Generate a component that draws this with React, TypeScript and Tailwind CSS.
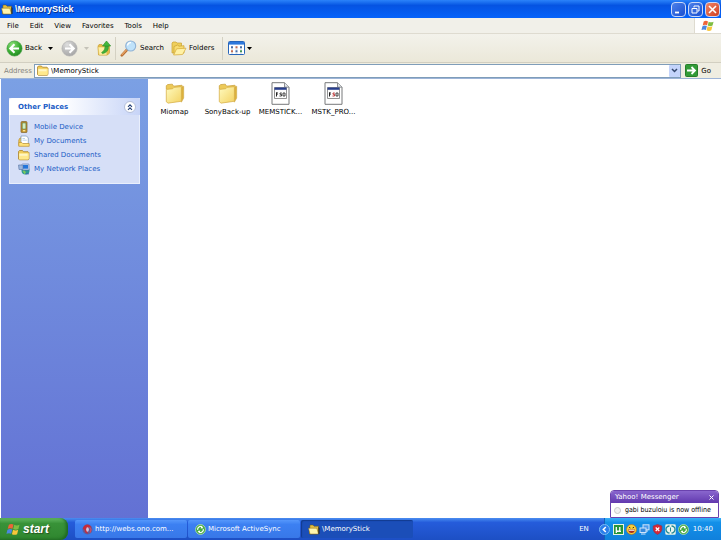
import React from "react";

const TEXT = "font-['DejaVu_Sans',Verdana,sans-serif] text-[7px] leading-[10px]";

function Folder({ className }: { className: string }) {
  return (
    <svg viewBox="0 0 24 24" className={className} aria-hidden="true">
      <defs>
        <linearGradient id="folderFront" x1="0" y1="0" x2="1" y2="1">
          <stop offset="0" stopColor="#fffbc0" />
          <stop offset="1" stopColor="#f3d262" />
        </linearGradient>
      </defs>
      <path d="M2.500 7V3.500L4 2.300 9 1.800 10.500 4 19.500 3 20.500 4.500V8L8 10Z" fill="#edca58" stroke="#c9a03a" strokeWidth=".8" />
      <path d="M18.500 6.500 21.500 4V17L19 21.500Z" fill="#dcb13c" stroke="#c9a03a" strokeWidth=".5" />
      <path d="M2.500 7.500 9.500 6.800 11 5.300 19 4.500V20.500L4.500 22.500 2.500 21Z" fill="url(#folderFront)" stroke="#d6ad43" strokeWidth=".8" />
    </svg>
  );
}

function SmallFolder({ className }: { className: string }) {
  return (
    <svg viewBox="0 0 12 11" className={className} aria-hidden="true">
      <path d="M.5 9.500V2L1.500 1H4.500L5.500 2.200H10L11 3.200V9.500L10.200 10.300H1.300Z" fill="#f0cb58" stroke="#a37a1b" strokeWidth=".7" />
      <path d="M1 3.800H10.800V9.200L10 10H1.500L1 9.500Z" fill="#ffe98c" />
      <path d="M1.500 4.300H9.500V6.300H1.500Z" fill="#fff6c4" />
    </svg>
  );
}

function OpenFolder({ className }: { className: string }) {
  return (
    <svg viewBox="0 0 12 11" className={className} aria-hidden="true">
      <path d="M2 1H5L6 2.200H10.500V9L9 10H1.500Z" fill="#e3bf44" stroke="#6b5410" strokeWidth=".5" />
      <path d="M.5 4.200H8.800L10.500 10H2Z" fill="#fff6ae" stroke="#8c6c12" strokeWidth=".5" />
      <path d="M10.500 3 11.500 4V9.800L10.500 10.300Z" fill="#2b2512" />
    </svg>
  );
}

function WinFlag({ className }: { className: string }) {
  return (
    <svg viewBox="0 0 16 14" className={className} aria-hidden="true">
      <path d="M3 1.800Q5.500.2 8 1.700L6.900 6.200Q4.500 4.900 1.800 6.300Z" fill="#ee6438" />
      <path d="M8.800 2Q11.500 3.500 14.500 1.900L13.300 6.500Q10.500 8 7.700 6.500Z" fill="#7fbd42" />
      <path d="M1.500 7.200Q4.200 5.800 6.700 7.100L5.500 11.600Q3.200 10.300.4 11.700Z" fill="#4b86e0" />
      <path d="M7.500 7.400Q10.300 8.900 13.100 7.400L11.900 12Q9.200 13.500 6.300 12Z" fill="#f8c63a" />
    </svg>
  );
}

function RoundArrow({ back, className }: { back?: boolean; className: string }) {
  const id = back ? "orbGreen" : "orbGrey";
  return (
    <svg viewBox="0 0 18 18" className={className} aria-hidden="true">
      <defs>
        <radialGradient id={id} cx=".35" cy=".25" r=".85">
          <stop offset="0" stopColor={back ? "#8be078" : "#dedede"} />
          <stop offset=".55" stopColor={back ? "#3cae34" : "#b9b9b9"} />
          <stop offset="1" stopColor={back ? "#1c8420" : "#a3a3a3"} />
        </radialGradient>
      </defs>
      <circle cx="9" cy="9" r="8" fill={`url(#${id})`} stroke={back ? "#3b9a38" : "#b0b0b0"} strokeWidth=".7" />
      <path
        d={back ? "M9 4.500 4.500 9 9 13.500M5 9H13.800" : "M9 4.500 13.500 9 9 13.500M13 9H4.200"}
        fill="none"
        stroke="#fff"
        strokeWidth="2.200"
      />
    </svg>
  );
}

function UpFolder() {
  return (
    <svg viewBox="0 0 15 16" className="h-4 w-[15px]" aria-hidden="true">
      <path d="M1 6 2 4.500H5L6 5.500H12.500V13L10.500 15H1.500Z" fill="#e6bd47" stroke="#c2982c" strokeWidth=".6" />
      <path d="M1 7H9L10 15H2Z" fill="#fff0a2" stroke="#d9b046" strokeWidth=".5" />
      <path d="M4.500 12.500Q8.200 10.500 8 5.800H11.500Q12 12.500 5.500 13.800Z" fill="#3fae38" stroke="#268a24" strokeWidth=".4" />
      <path d="M5.500 6 9.500 1 13.700 6Z" fill="#43b83b" stroke="#268a24" strokeWidth=".6" />
    </svg>
  );
}

function SearchGlass() {
  return (
    <svg viewBox="0 0 17 17" className="size-[17px] shrink-0" aria-hidden="true">
      <path d="M6.800 10 1.800 15.300" stroke="#b86d32" strokeWidth="2.600" strokeLinecap="round" />
      <path d="M6.500 9.800 2 14.600" stroke="#e9a867" strokeWidth="1.100" strokeLinecap="round" />
      <circle cx="10.700" cy="6" r="5" fill="#bfe2fa" stroke="#8fb2d5" strokeWidth="1.100" />
      <path d="M7.500 5.500A3.400 3.400 0 0 1 11 2.600" stroke="#fff" strokeWidth="1.300" fill="none" />
    </svg>
  );
}

function FoldersIcon() {
  return (
    <svg viewBox="0 0 16 15" className="h-[15px] w-4 shrink-0" aria-hidden="true">
      <path d="M1 12V2L2 1H5L6 2H10.500V11Z" fill="#efcf5d" stroke="#c9a131" strokeWidth=".7" />
      <path d="M3 13.500V5.500L6.500 4 8 5.200 13 4.700V12Z" fill="#f8dc71" stroke="#c9a131" strokeWidth=".7" />
      <path d="M2.600 14 5.600 7.800 15 7.200 11.600 13.500Z" fill="#fff1a5" stroke="#d4a936" strokeWidth=".7" />
    </svg>
  );
}

function ViewsIcon() {
  return (
    <svg viewBox="0 0 17 14" className="h-3.5 w-[17px]" aria-hidden="true">
      <rect x=".5" y=".5" width="16" height="13" rx="1" fill="#fff" stroke="#2765ba" />
      <path d="M1 1H16V3.600H1Z" fill="#2d78dc" />
      <path d="M3 5.300h2v2H3zM12 5.300h2v2h-2zM7.500 9.300h2v2h-2z" fill="#456da8" />
      <path d="M7.500 5.300h2v2h-2zM3 9.300h2v2H3z" fill="#c36d52" />
      <path d="M12 9.300h2v2h-2z" fill="#429456" />
      <path d="M3 8h2M7.500 8h2M12 8h2M3 12h2M7.500 12h2M12 12h2" stroke="#9eabc0" strokeWidth=".6" />
    </svg>
  );
}

function FileIcon({ accent }: { accent: string }) {
  return (
    <svg viewBox="0 0 19 23" className="h-[23px] w-[19px]" aria-hidden="true">
      <path d="M1 .7H13.500L18 5.200V22.300H1Z" fill="#fff" stroke="#77797b" />
      <path d="M13.500.7V5.200H18" fill="#dfe3e8" stroke="#77797c" strokeWidth=".8" />
      <path d="M3.500 5.500H15.500V16.500H3.500Z" fill="#fcfcfc" stroke="#777" strokeWidth=".8" />
      <path d="M3.500 5.500H15.500V7.800H3.500Z" fill="#273d8c" />
      <path d="M5.500 10.500v4M5 11h2M5 12.500h1.500" stroke="#222" />
      <path d="M10.800 11H9v1.300h1.500v1.700H8.500" stroke={accent} fill="none" strokeWidth=".9" />
      <path d="M12 11h2v3h-2z" stroke="#333" fill="none" strokeWidth=".9" />
    </svg>
  );
}

function MobileIcon() {
  return (
    <svg viewBox="0 0 12 12" className="size-3" aria-hidden="true">
      <rect x="3" y=".6" width="6" height="11" rx="1" fill="#c39530" stroke="#7a5c20" strokeWidth=".7" />
      <rect x="4.200" y="2" width="3.700" height="6" fill="#d3edbe" stroke="#4f7544" strokeWidth=".5" />
      <path d="M5 9.700H7.200" stroke="#fff0a2" strokeWidth="1.200" />
    </svg>
  );
}

function DocumentsIcon() {
  return (
    <svg viewBox="0 0 12 12" className="size-3" aria-hidden="true">
      <path d="M.8 5 2 3H5V10.500H.8Z" fill="#f2cb50" stroke="#b88a2a" strokeWidth=".7" />
      <path d="M3 1H8.500L10.300 3V9H3Z" fill="#fff" stroke="#7593b5" strokeWidth=".7" />
      <path d="M4.500 3.500H7M4.500 5.200H8.800" stroke="#a9cbe8" strokeWidth=".8" />
      <path d="M.8 7.500H3.800L4.800 8.500H11.200V11.300H.8Z" fill="#ffe27a" stroke="#bd9233" strokeWidth=".7" />
    </svg>
  );
}

function NetworkIcon() {
  return (
    <svg viewBox="0 0 12 12" className="size-3" aria-hidden="true">
      <circle cx="7.500" cy="7.500" r="4" fill="#2a9a94" />
      <path d="M4.500 8Q7 6 8 10L6.500 11.300Z" fill="#7ac95c" />
      <rect x="4" y="1" width="7" height="6" rx=".6" fill="#c7daf0" stroke="#506aa8" strokeWidth=".6" />
      <path d="M5 2H10V5.700H5Z" fill="#2375da" />
      <path d="M.5 2H4L5 3.500V6.500H1Z" fill="#9cb7dc" stroke="#5773a5" strokeWidth=".6" />
      <path d="M7.500 10.800H11" stroke="#3b69ad" />
    </svg>
  );
}

function ActiveSyncIcon({ className }: { className: string }) {
  return (
    <svg viewBox="0 0 12 12" className={className} aria-hidden="true">
      <circle cx="6" cy="6" r="5.400" fill="#42a83e" stroke="#c5e8b9" strokeWidth=".8" />
      <path d="M3 6.500A3 3 0 0 1 7.800 3.400M9 5.500A3 3 0 0 1 4.200 8.600" fill="none" stroke="#fff" strokeWidth="1.300" />
      <path d="M7 1.800 9.300 4.500 6.200 5ZM5 10.200 2.700 7.500 5.800 7Z" fill="#fff" />
    </svg>
  );
}

function BrowserIcon() {
  return (
    <svg viewBox="0 0 12 12" className="size-[11px]" aria-hidden="true">
      <circle cx="6" cy="6" r="5.500" fill="#5c5d9d" />
      <path d="M.8 5Q3-.5 8 1L10.500 3.500 6.500 4 5 6 6.500 10.500Q3 10 2.800 6.500Z" fill="#c52b3c" />
      <ellipse cx="6" cy="6" rx="1.500" ry="2.500" fill="#d9c3dd" />
      <path d="M8.200 3.500 9.800 6 8.800 9.500" stroke="#d8475d" strokeWidth="1.300" fill="none" />
    </svg>
  );
}

function Caret({ className }: { className: string }) {
  return (
    <svg viewBox="0 0 5 3" className={`h-[3px] w-[5px] ${className}`} aria-hidden="true">
      <path d="M0 0H5L2.500 3Z" fill="currentColor" />
    </svg>
  );
}

function TitleButton({ label, close, children }: { label: string; close?: boolean; children: React.ReactNode }) {
  return (
    <button
      aria-label={label}
      className={`flex size-[15px] items-center justify-center rounded-sm border border-[#c9d8f8] bg-linear-to-br ${close ? "from-[#ee8467] to-[#cf3c1c]" : "from-[#4c80ea] to-[#1b4fd0]"}`}
    >
      <svg viewBox="0 0 11 11" className="size-[11px]" fill="none" stroke="#fff" aria-hidden="true">
        {children}
      </svg>
    </button>
  );
}

const menus = ["File", "Edit", "View", "Favorites", "Tools", "Help"];

const places = [
  { name: "Mobile Device", icon: <MobileIcon /> },
  { name: "My Documents", icon: <DocumentsIcon /> },
  { name: "Shared Documents", icon: <SmallFolder className="size-3" /> },
  { name: "My Network Places", icon: <NetworkIcon /> },
];

const files = [
  { name: "Miomap", icon: <Folder className="h-[23px] w-[22px]" /> },
  { name: "SonyBack-up", icon: <Folder className="h-[23px] w-[22px]" /> },
  { name: "MEMSTICK...", icon: <FileIcon accent="#333333" /> },
  { name: "MSTK_PRO...", icon: <FileIcon accent="#bd3030" /> },
];

const tasks = [
  { name: "http://webs.ono.com...", icon: <BrowserIcon />, active: false },
  { name: "Microsoft ActiveSync", icon: <ActiveSyncIcon className="size-[11px]" />, active: false },
  { name: "\\MemoryStick", icon: <OpenFolder className="h-[11px] w-3" />, active: true },
];

function TitleBar() {
  return (
    <header className="flex h-[18px] shrink-0 items-center bg-linear-to-b from-[#2b83fa] via-[#0553e2] via-30% to-[#0663fa] px-px">
      <OpenFolder className="h-[11px] w-3" />
      <h1 className="ml-0.5 font-['Liberation_Sans',sans-serif] text-[9px] leading-3 font-bold text-white [text-shadow:1px_1px_#0a328c]">\MemoryStick</h1>
      <div className="ml-auto flex gap-0.5">
        <TitleButton label="Minimize"><path d="M2 8.500H6" strokeWidth="1.800" /></TitleButton>
        <TitleButton label="Restore"><path d="M4 3.500V2H9V7H7.500M2 4.500H7V9H2Z" /></TitleButton>
        <TitleButton label="Close" close><path d="M2 2 9 9M9 2 2 9" strokeWidth="1.600" /></TitleButton>
      </div>
    </header>
  );
}

function MenuBar() {
  return (
    <nav className="flex h-4 shrink-0 items-stretch border-b border-[#dedbd0] bg-[#f1f0e9]">
      <div className="flex items-center gap-[11px] pl-[7px]">
        {menus.map((m) => <button key={m}>{m}</button>)}
      </div>
      <div className="ml-auto flex w-[27px] items-center justify-center border-l border-[#dedbd0] bg-white">
        <WinFlag className="h-3 w-3.5" />
      </div>
    </nav>
  );
}

function ToolBar() {
  return (
    <div className="flex h-[29px] shrink-0 items-center border-b border-[#d2cfc1] bg-linear-to-b from-[#f3f2eb] to-[#ebe8d9] pl-1.5">
      <button className="flex w-[37px] items-center gap-0.5"><RoundArrow back className="size-[17px] shrink-0" />Back</button>
      <button aria-label="Back history" className="ml-[5px] flex"><Caret className="text-black" /></button>
      <button aria-label="Forward" className="ml-2 flex"><RoundArrow className="size-[17px]" /></button>
      <button aria-label="Forward history" className="ml-1.5 flex"><Caret className="text-[#c4c2b8]" /></button>
      <button aria-label="Up" className="ml-2 flex"><UpFolder /></button>
      <span className="mr-1 ml-[3px] h-[23px] w-px bg-[#d4d1c3]" />
      <button className="flex w-[51px] items-center gap-[3px]"><SearchGlass />Search</button>
      <button className="flex w-[46px] items-center gap-0.5"><FoldersIcon />Folders</button>
      <span className="mx-[5px] h-[23px] w-px bg-[#d4d1c3]" />
      <button aria-label="Views" className="flex items-center gap-0.5"><ViewsIcon /><Caret className="text-black" /></button>
    </div>
  );
}

function AddressBar() {
  return (
    <form className="flex h-[15px] shrink-0 items-center bg-[#efede1] pr-2.5 pl-1" onSubmit={(e) => e.preventDefault()}>
      <label htmlFor="address" className="w-[30px] text-[#85847d]">Address</label>
      <div className="flex h-3.5 min-w-0 flex-1 items-center border border-[#7f9db9] bg-white pl-0.5">
        <SmallFolder className="h-[11px] w-3" />
        <input id="address" defaultValue="\MemoryStick" className="ml-0.5 min-w-0 flex-1 bg-transparent outline-none" />
        <button type="button" aria-label="Show addresses" className="flex h-3 w-[11px] items-center justify-center rounded-[1px] bg-[#c4d4fb]">
          <svg viewBox="0 0 7 5" className="h-[5px] w-[7px]" aria-hidden="true"><path d="M1 1 3.500 3.500 6 1" fill="none" stroke="#33476d" strokeWidth="1.500" /></svg>
        </button>
      </div>
      <button className="ml-1 flex items-center gap-[3px]">
        <svg viewBox="0 0 13 13" className="size-[13px]" aria-hidden="true">
          <rect x=".5" y=".5" width="12" height="12" rx="1" fill="#329b37" stroke="#267e2a" />
          <path d="M2 6.500H9M6.500 3 10 6.500 6.500 10" fill="none" stroke="#fff" strokeWidth="1.800" />
        </svg>
        Go
      </button>
    </form>
  );
}

function Sidebar() {
  return (
    <aside className="ml-px w-[147px] shrink-0 bg-linear-to-b from-[#7ba0e4] to-[#6371d4] px-2 pt-[19px]">
      <section className="bg-[#d6dff7]">
        <div className="flex h-[17px] items-center justify-between rounded-t-[3px] bg-linear-to-r from-white from-40% to-[#c7d4f7] pr-1 pl-[9px]">
          <h2 className="font-bold text-[#215dc6]">Other Places</h2>
          <button aria-label="Collapse" className="flex size-3 items-center justify-center rounded-full border border-[#b4bfda] bg-white">
            <svg viewBox="0 0 8 8" className="size-2" fill="none" stroke="#264178" strokeWidth="1.100" aria-hidden="true"><path d="M2 3.800 4 1.800 6 3.800M2 6.800 4 4.800 6 6.800" /></svg>
          </button>
        </div>
        <ul className="flex flex-col gap-0.5 border border-t-0 border-[#e9effc] pt-1.5 pb-2 pl-2">
          {places.map((p) => (
            <li key={p.name}><a href="#" className="flex h-3 items-center gap-1 text-[#215dc6]">{p.icon}{p.name}</a></li>
          ))}
        </ul>
      </section>
    </aside>
  );
}

function FilePane() {
  return (
    <main className="min-w-0 flex-1 bg-white">
      <ul className="flex flex-wrap pt-[3px]">
        {files.map((f) => (
          <li key={f.name} className="w-[53px]">
            <button className="flex w-full flex-col items-center gap-0.5 whitespace-nowrap">{f.icon}<span>{f.name}</span></button>
          </li>
        ))}
      </ul>
    </main>
  );
}

function Toast() {
  return (
    <div role="status" className="absolute right-0.5 bottom-[22px] w-[109px] overflow-hidden rounded-t-sm border border-[#6a42ae] bg-white">
      <div className="flex h-3 items-center justify-between bg-linear-to-b from-[#8a66ce] to-[#6238ae] px-1 text-white">
        <span>Yahoo! Messenger</span>
        <button aria-label="Dismiss" className="flex">
          <svg viewBox="0 0 5 5" className="size-[5px]" stroke="#fff" aria-hidden="true"><path d="M.5.500 4.500 4.500M4.500.500.500 4.500" /></svg>
        </button>
      </div>
      <div className="flex h-3.5 items-center gap-1 pl-[3px] font-['DejaVu_Sans_Condensed',sans-serif] whitespace-nowrap">
        <span className="size-[7px] shrink-0 rounded-full border border-[#c8c8c8] bg-[#f1f1f1]" />
        gabi buzuloiu is now offline
      </div>
    </div>
  );
}

function TrayIcons() {
  return (
    <div className="flex items-center gap-0.5">
      <svg viewBox="0 0 11 11" className="size-[11px]" aria-hidden="true">
        <rect x=".5" y=".5" width="10" height="10" fill="#26953b" stroke="#e5f4e3" />
        <path d="M3.300 9V3M3.300 3V6.500Q5 8 6.800 6.500V3M6.800 5V7.300H8" stroke="#fff" strokeWidth="1.300" fill="none" />
      </svg>
      <svg viewBox="0 0 11 11" className="size-[11px]" aria-hidden="true">
        <circle cx="5.500" cy="5.500" r="5" fill="#f8cf38" stroke="#b36c1b" strokeWidth=".6" />
        <path d="M2 5.500H9Q8.500 9 5.500 9T2 5.500Z" fill="#a92c1f" /><path d="M2.500 5.700H8.500V6.800H2.700Z" fill="#fff" />
        <path d="M3 3.200 4.400 4M8 3.200 6.600 4" stroke="#493519" />
      </svg>
      <svg viewBox="0 0 11 11" className="size-[11px]" aria-hidden="true">
        <rect x="4" y=".8" width="6" height="5" fill="#4c9aea" stroke="#d0e4fa" />
        <path d="M6 7H9" stroke="#d0e4fa" />
        <rect x="1" y="4" width="6" height="4.500" fill="#368add" stroke="#d0e4fa" /><path d="M2 10H6.500" stroke="#d0e4fa" />
      </svg>
      <svg viewBox="0 0 11 11" className="size-[11px]" aria-hidden="true">
        <path d="M5.500.5 9.800 2V5.500Q9.500 8.500 5.500 10.500 1.500 8.500 1.200 5.500V2Z" fill="#d72736" stroke="#8f3651" strokeWidth=".7" />
        <path d="M3.700 3.500 7.300 7M7.300 3.500 3.700 7" stroke="#fff" strokeWidth="1.200" />
      </svg>
      <svg viewBox="0 0 11 11" className="size-[11px]" aria-hidden="true">
        <rect x=".5" y=".5" width="10" height="10" rx="1" fill="#e8f5f0" stroke="#b5d9df" />
        <path d="M4.500 2A3.500 3.500 0 0 0 4.500 9M6.500 2A3.500 3.500 0 0 1 6.500 9" fill="none" stroke="#238893" strokeWidth="1.300" />
        <path d="M5.500 3.500V7.500" stroke="#238893" />
      </svg>
      <ActiveSyncIcon className="size-[11px]" />
    </div>
  );
}

function TaskBar() {
  return (
    <footer className="flex h-[22px] shrink-0 items-stretch bg-linear-to-b from-[#4b8df0] via-[#255cdb] via-20% to-[#1d4fc4] text-white">
      <button className="flex w-[68px] items-center rounded-r-lg bg-linear-to-b from-[#62b963] via-[#389238] via-25% to-[#2f862f] pl-1.5 shadow-[inset_-2px_-1px_3px_#1f6823]">
        <WinFlag className="h-[13px] w-[15px]" />
        <span className="ml-0.5 font-['Liberation_Sans',sans-serif] text-[12px] leading-4 font-bold italic [text-shadow:1px_1px_1px_#24531f]">start</span>
      </button>
      <div className="ml-[7px] flex min-w-0 flex-1 items-center gap-px">
        {tasks.map((t) => (
          <button
            key={t.name}
            className={`flex h-[18px] w-28 items-center gap-0.5 rounded-xs pl-[7px] whitespace-nowrap ${t.active ? "bg-[#1b4eb8] shadow-[inset_1px_1px_1px_#123b90]" : "bg-linear-to-b from-[#5597fb] via-[#3c80f2] via-25% to-[#3878e8]"}`}
          >
            {t.icon}{t.name}
          </button>
        ))}
      </div>
      <button aria-label="Language" className="mr-[15px]">EN</button>
      <div className="flex items-center border-l border-[#1360b8] bg-linear-to-b from-[#39b1f8] via-[#1390e9] via-20% to-[#1080dc] pr-2">
        <button aria-label="Show hidden icons" className="-ml-1.5 mr-[3px] flex size-[11px] items-center justify-center rounded-full border border-[#79bdf4] bg-[#2a7eea]">
          <svg viewBox="0 0 7 7" className="size-[7px]" fill="none" stroke="#fff" strokeWidth="1.500" aria-hidden="true"><path d="M4.800 1 2.300 3.500 4.800 6" /></svg>
        </button>
        <TrayIcons />
        <time className="ml-1">10:40</time>
      </div>
    </footer>
  );
}

export default function App() {
  return (
    <div className={`relative flex min-h-screen flex-col bg-white text-black ${TEXT}`}>
      <TitleBar />
      <MenuBar />
      <ToolBar />
      <AddressBar />
      <div className="flex flex-1 border-t border-[#9db4d8]">
        <Sidebar />
        <FilePane />
      </div>
      <TaskBar />
      <Toast />
    </div>
  );
}
